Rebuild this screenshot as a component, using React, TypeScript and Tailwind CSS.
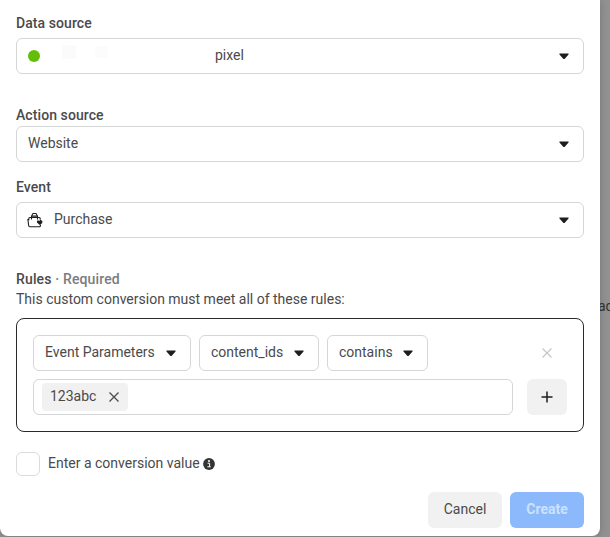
import type { ReactNode } from 'react'

function Caret() {
  return (
    <svg width="10" height="7" viewBox="0 0 10 7" className="flex-shrink-0" fill="#1c1e21">
      <path d="M1 .5h8c.7 0 .8.7.5 1.100L5.800 5.700c-.4.5-1.200.5-1.600 0L.5 1.600C.2 1.200.3.5 1 .5Z" />
    </svg>
  )
}

function Cross({ className }: { className: string }) {
  return (
    <svg viewBox="0 0 12 12" className={className} fill="none" stroke="currentColor">
      <path d="M1.500 1.500l9 9M10.500 1.500l-9 9" />
    </svg>
  )
}

function BagIcon() {
  return (
    <svg width="16" height="16" viewBox="0 0 16 16" fill="none" stroke="#1c1e21" strokeWidth="1.100">
      <path d="M13.200 7.800V6.500q0-1-1-1H2.800q-1 0-1 1v1.100H.9l.8 6.200q.1.900 1 .9h9.700q1 0 1-1v-1" />
      <path d="M4.500 7.500V4.100L6 1.500h3l1.500 2.600v3.400M4.500 4.100h6" />
      <path d="M10.600 9.100h1.300l.6.600 1-1.100 1.300.6v1.300l-1.900 1.900-2.300-2Z" fill="#1c1e21" strokeLinejoin="round" />
    </svg>
  )
}

function InfoIcon() {
  return (
    <svg width="12" height="12" viewBox="0 0 12 12">
      <circle cx="6" cy="6" r="5.900" fill="#333436" />
      <path d="M4.600 5.200h2v3.400M4.400 8.800h3.300" stroke="#fff" fill="none" />
      <circle cx="6" cy="3" r="1" fill="#fff" />
    </svg>
  )
}

function Select({ children }: { children: ReactNode }) {
  return (
    <button className="flex h-9 w-full items-center justify-between rounded-md border border-[#d5d6d7] pl-[11px] pr-[14px]">
      {children}
      <Caret />
    </button>
  )
}

const rules = [
  { label: 'Event Parameters', width: 'w-[158px]' },
  { label: 'content_ids', width: 'w-[120px]' },
  { label: 'contains', width: 'w-[101px]' },
]

export default function App() {
  return (
    <div className="relative h-[537px] w-[610px] overflow-hidden bg-[#929292] font-['Roboto',sans-serif] text-sm leading-5 text-[#4a4a4b]">
      {/* Page behind the dialog */}
      <span className="absolute left-[598px] top-[296px] text-[#333]">ad</span>

      {/* Dialog */}
      <main className="relative h-[536px] w-[600px] rounded-b-lg bg-white px-4 pt-[13px] shadow-[0_1px_8px_rgba(0,0,0,0.2)]">
        <h2 className="mb-[5px] font-medium tracking-[0.08px]">Data source</h2>
        <Select>
          <span className="flex items-center">
            <span className="h-3 w-3 rounded-full bg-[#63be09]" />
            <span className="mb-2 ml-[22px] h-[14px] w-[14px] bg-[#fbfbfb]" />
            <span className="mb-2 ml-[19px] h-3 w-[13px] bg-[#fcfcfc]" />
            <span className="ml-[107px] pb-[2px]">pixel</span>
          </span>
        </Select>

        <h2 className="mb-px mt-[31px] font-medium tracking-[0.08px]">Action source</h2>
        <Select>
          <span className="pb-[2px]">Website</span>
        </Select>

        <h2 className="mb-[5px] mt-[15px] font-medium tracking-[0.08px]">Event</h2>
        <Select>
          <span className="flex items-center">
            <span className="mr-[11px] -ml-[1px]">
              <BagIcon />
            </span>
            <span className="pb-[2px]">Purchase</span>
          </span>
        </Select>

        <h2 className="mt-[31px] font-medium tracking-[0.14px]">
          Rules <span className="text-[#7b7c7e]">· Required</span>
        </h2>
        <p>This custom conversion must meet all of these rules:</p>

        <section className="mt-[9px] flex h-[114px] flex-col gap-2 rounded-lg border border-[#292a2c] p-4">
          <div className="flex items-center gap-2">
            {rules.map((rule) => (
              <button
                key={rule.label}
                className={`flex h-9 items-center justify-between rounded-md border border-[#d5d6d7] pl-[11px] pr-[14px] ${rule.width}`}
              >
                <span className="pb-[2px]">{rule.label}</span>
                <Caret />
              </button>
            ))}
            <Cross className="ml-auto mr-[14px] h-3 w-3 stroke-[1.2] text-[#c5c6c8]" />
          </div>
          <div className="flex gap-[14px]">
            <div className="flex h-9 w-[480px] items-center rounded-md border border-[#d5d6d7] pl-2">
              <span className="flex h-7 w-[86px] items-center justify-between rounded bg-[#f1f1f1] px-2">
                <span className="pb-[2px]">123abc</span>
                <Cross className="h-3 w-3 stroke-[1.3]" />
              </span>
            </div>
            <button className="flex h-9 w-10 items-center justify-center rounded-md bg-[#f1f1f1]">
              <svg width="12" height="12" viewBox="0 0 12 12" stroke="#1c1e21" strokeWidth="1.500">
                <path d="M6 .5v11M.5 6h11" />
              </svg>
            </button>
          </div>
        </section>

        <label className="mt-5 flex items-center">
          <span className="mr-2 h-6 w-6 rounded-md border border-[#d9dbdd]" />
          <span className="pb-[2px]">Enter a conversion value</span>
          <span className="ml-[3px]">
            <InfoIcon />
          </span>
        </label>

        <footer className="mt-4 flex justify-end gap-2">
          <button className="h-9 w-[74px] rounded-md bg-[#f1f1f1] pb-[2px]">Cancel</button>
          <button className="h-9 w-[74px] rounded-md bg-[#8bb9fb] pb-[2px] font-bold text-[#cbe2ff]">Create</button>
        </footer>
      </main>
    </div>
  )
}
